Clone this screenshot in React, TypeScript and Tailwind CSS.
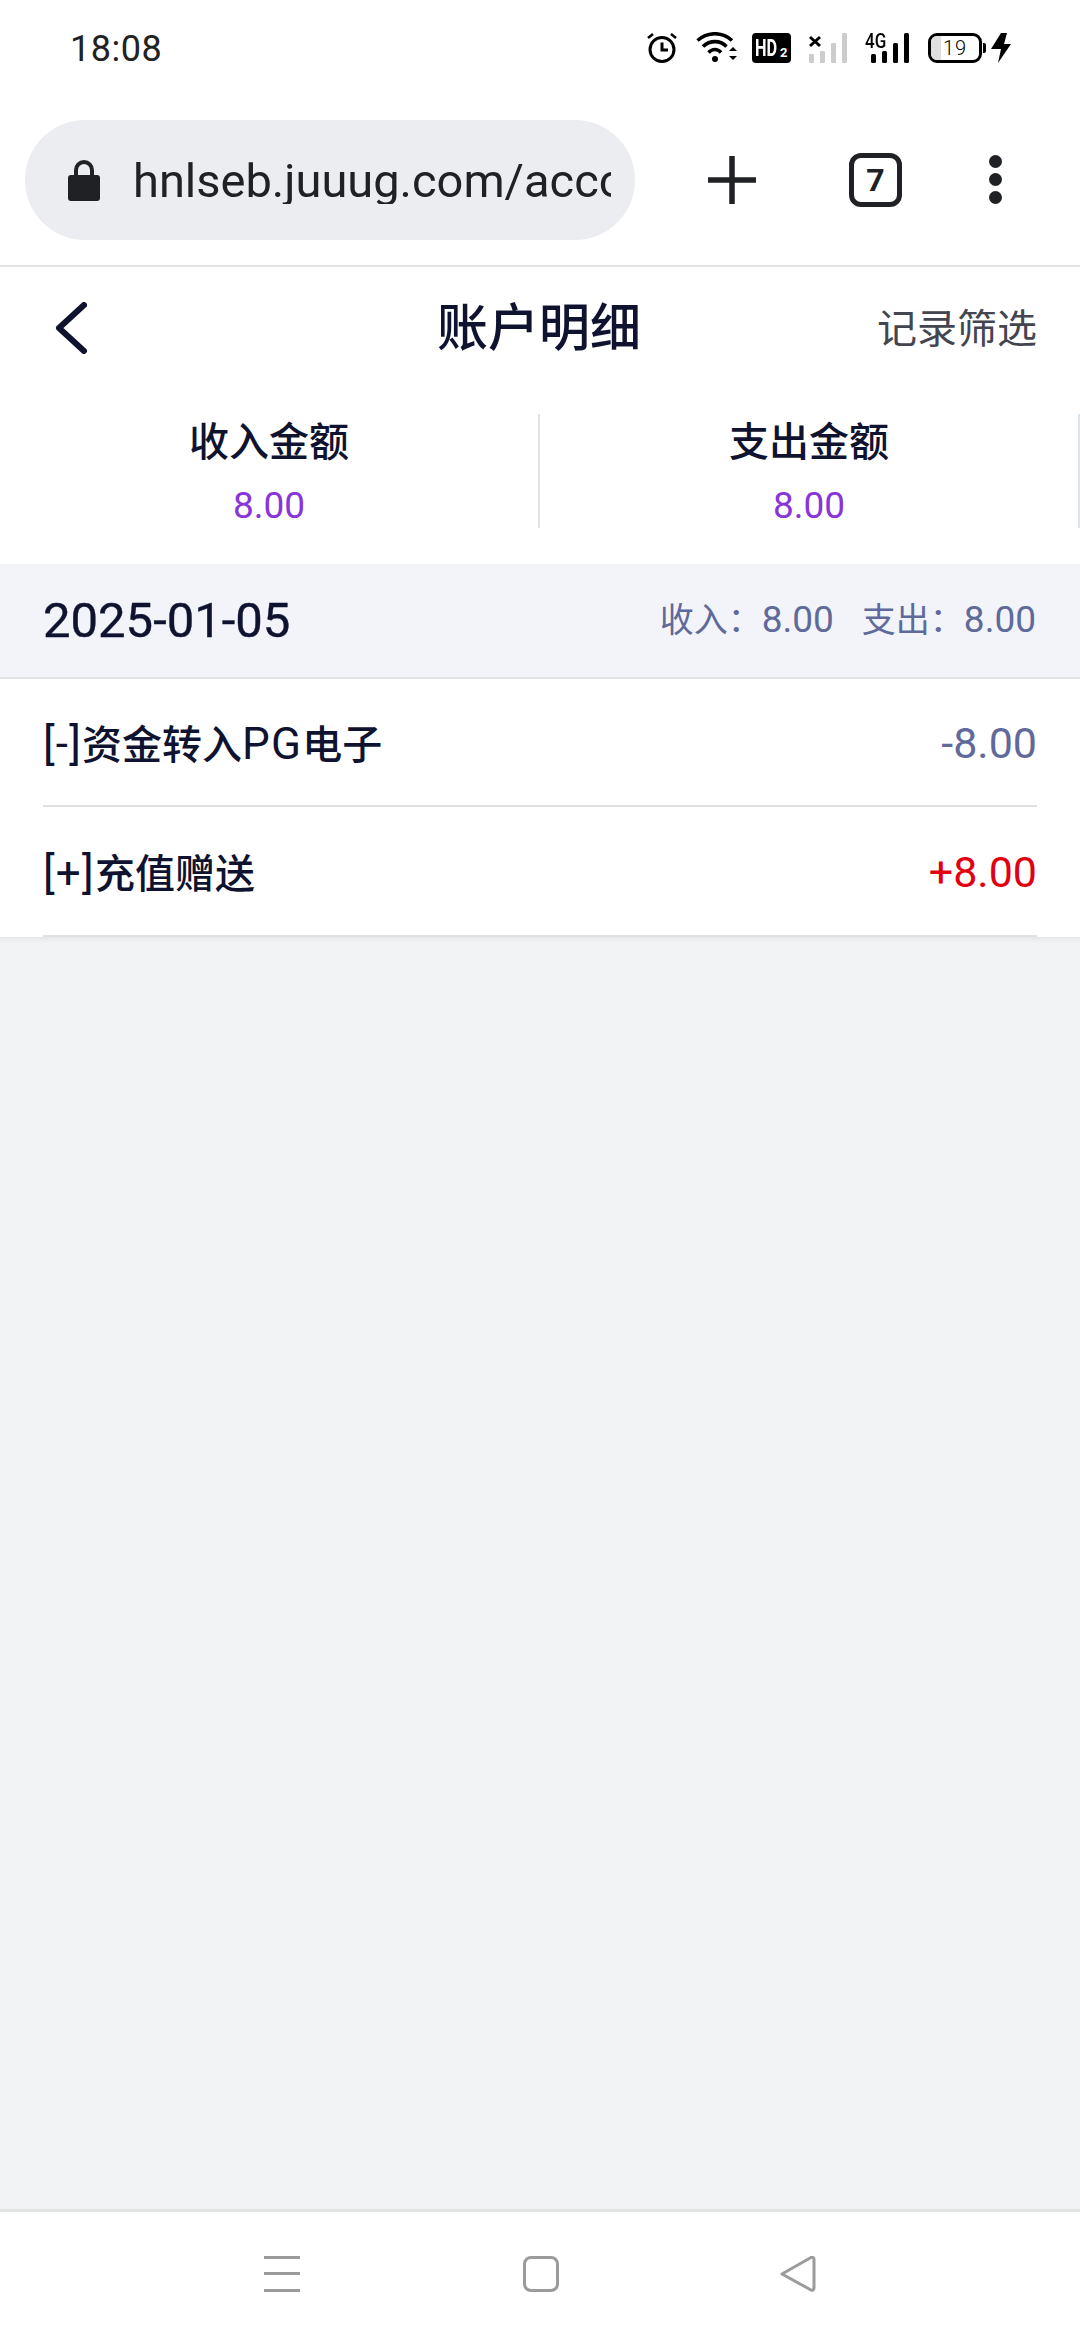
import type { ReactNode } from 'react'

const FONT = '[font-family:Roboto,"Noto_Sans_CJK_SC",sans-serif]'

/* ---------- status bar icons ---------- */

function AlarmIcon() {
  return (
    <svg width="30" height="31" viewBox="0 0 30 31" fill="none" stroke="#000">
      <circle cx="15" cy="17.5" r="12" strokeWidth="3" />
      <path d="M15 10.5v7.5h6" strokeWidth="3" />
      <path d="M1 6l5-4M29 6l-5-4" strokeWidth="2.6" />
    </svg>
  )
}

function WifiIcon() {
  return (
    <svg width="42" height="31" viewBox="0 0 42 31" fill="none">
      <path d="M1.5 8.5C12 -0.5 26 -0.5 36 8.5" stroke="#000" strokeWidth="3.6" />
      <path d="M7 14.5C14 8 24 8 30.5 14.5" stroke="#000" strokeWidth="3.6" />
      <path d="M12.5 20.5C16.5 16.5 21.5 16.5 25 20.5" stroke="#000" strokeWidth="3.6" />
      <circle cx="19" cy="27" r="3" fill="#000" />
      <path d="M33 19l4-4 4 4zM33 24l4 4 4-4z" fill="#000" />
    </svg>
  )
}

function HdBadge() {
  return (
    <div className="relative h-[30px] w-[39px] rounded-[4px] bg-black font-['Roboto',sans-serif] font-bold text-white">
      <span className="absolute left-[3px] top-[3px] origin-left text-[24px] leading-none [transform:scaleX(0.68)]">HD</span>
      <span className="absolute left-[28px] top-[13px] text-[13px] leading-none">2</span>
    </div>
  )
}

function EmptySignal() {
  return (
    <svg width="38" height="30" viewBox="0 0 38 30">
      <path d="M1 4l10 9M11 4L1 13" stroke="#000" strokeWidth="3" />
      <rect x="0" y="21" width="5" height="9" rx="1" fill="#ccc" />
      <rect x="11" y="18" width="5" height="12" rx="1" fill="#ccc" />
      <rect x="22" y="10" width="5" height="20" rx="1" fill="#ccc" />
      <rect x="33" y="0" width="5" height="30" rx="1" fill="#ccc" />
    </svg>
  )
}

function Signal4G() {
  return (
    <div className="relative h-[30px] w-[45px]">
      <span className="absolute -top-[2px] left-0 origin-left font-['Roboto',sans-serif] text-[20px] font-medium leading-none text-black [transform:scaleX(0.85)]">
        4G
      </span>
      <svg className="absolute left-0 top-0" width="45" height="30" viewBox="0 0 45 30">
        <rect x="6" y="21" width="5" height="9" rx="1.5" fill="#000" />
        <rect x="17" y="18" width="5" height="12" rx="1.5" fill="#000" />
        <rect x="28" y="10" width="5" height="20" rx="1.5" fill="#000" />
        <rect x="39" y="0" width="5" height="30" rx="1.5" fill="#000" />
      </svg>
    </div>
  )
}

function Battery() {
  return (
    <div className="flex items-center">
      <div className="relative flex h-[30px] w-[54px] items-center justify-center overflow-hidden rounded-[9px] border-[3px] border-black">
        <div className="absolute inset-y-0 left-0 w-[10px] bg-[#dfdfdf]" />
        <span className="relative font-['Roboto',sans-serif] text-[20px] font-light leading-none tracking-[1px] text-black">19</span>
      </div>
      <div className="ml-[1px] h-[10px] w-[3px] rounded-r-[2px] bg-black" />
    </div>
  )
}

function Bolt() {
  return (
    <svg width="20" height="30" viewBox="0 0 20 30">
      <path d="M10 0h6l-3 11h7L7 30l3-14H0z" fill="#000" />
    </svg>
  )
}

/* ---------- android navigation ---------- */

function NavBar() {
  return (
    <div className="flex h-[131px] items-start justify-between border-t-[3px] border-[#e2e4e2] bg-white pl-[264px] pr-[264px] pt-[44px]">
      <svg width="37" height="36" viewBox="0 0 37 36" fill="#9b9b9b">
        <rect x="0" y="0" width="36" height="3" />
        <rect x="0" y="16" width="36" height="3" />
        <rect x="0" y="33" width="36" height="3" />
      </svg>
      <div className="h-[36px] w-[36px] rounded-[8px] border-[3px] border-[#9b9b9b]" />
      <svg width="36" height="36" viewBox="0 0 36 36" fill="none">
        <path d="M2 18L31 1.5c1.5-.8 3 0 3 2V32c0 2-1.500 2.800-3 2z" stroke="#9b9b9b" strokeWidth="3" strokeLinejoin="round" />
      </svg>
    </div>
  )
}

/* ---------- page pieces ---------- */

function SummaryCell({ title }: { title: string }) {
  return (
    <div className="flex h-[114px] w-[540px] flex-col items-center justify-start border-r-2 border-[#dfe3ea] pt-[9px]">
      <div className="text-[40px] font-medium leading-[40px] text-[#0f1330]">{title}</div>
      <div className="mt-[25px] text-[37px] leading-[36px] text-[#8a35d8]">8.00</div>
    </div>
  )
}

function RecordRow({ label, amount, amountClass, height }: { label: ReactNode; amount: string; amountClass: string; height: string }) {
  return (
    <div className={`mx-[43px] flex items-center justify-between border-b-2 border-[#e0e0e0] pt-[3px] ${height}`}>
      <span className="text-[40px] font-medium leading-none text-[#0f1330]">{label}</span>
      <span className={`text-[43px] leading-none ${amountClass}`}>{amount}</span>
    </div>
  )
}

function Latin({ children }: { children: ReactNode }) {
  return <span className="text-[44px] font-normal tracking-[1.2px]">{children}</span>
}

function DayTotal({ label }: { label: string }) {
  return (
    <span className="text-[34px] leading-none">
      {label}：<span className="text-[37px]">8.00</span>
    </span>
  )
}

export default function App() {
  return (
    <div className={`flex h-[2340px] w-[1080px] flex-col overflow-hidden bg-[#f2f3f5] ${FONT}`}>
      {/* status bar */}
      <div className="flex h-[92px] items-center justify-between bg-white pl-[70px] pr-[69px] pt-[3px]">
        <span className="pt-[2px] text-[36px] leading-none tracking-[0.5px] text-[#222]">18:08</span>
        <div className="flex items-center">
          <AlarmIcon />
          <div className="ml-[19px]"><WifiIcon /></div>
          <div className="ml-[14px]"><HdBadge /></div>
          <div className="ml-[18px]"><EmptySignal /></div>
          <div className="ml-[18px]"><Signal4G /></div>
          <div className="ml-[18px]"><Battery /></div>
          <div className="ml-[5px]"><Bolt /></div>
        </div>
      </div>

      {/* browser toolbar */}
      <div className="flex h-[175px] items-start border-b-[2px] border-[#e2e2e2] bg-white pl-[25px] pt-[28px]">
        <div className="flex h-[120px] w-[610px] items-center rounded-[60px] bg-[#ebedf0] pl-[43px]">
          <svg width="32" height="42" viewBox="0 0 32 42" className="shrink-0">
            <path d="M8 18v-7a8 8 0 0 1 16 0v7" fill="none" stroke="#202124" strokeWidth="4" />
            <rect x="0" y="16" width="32" height="26" rx="3" fill="#202124" />
          </svg>
          <div className="ml-[33px] w-[478px] overflow-hidden whitespace-nowrap text-[47px] leading-none text-[#202124] [mask-image:linear-gradient(to_right,black_90%,#666_100%)]">
            hnlseb.juuug.com/account
          </div>
        </div>
        <svg width="48" height="48" viewBox="0 0 48 48" className="ml-[73px] mt-[36px]">
          <path d="M24 1v46M1 24h46" stroke="#202124" strokeWidth="5.5" strokeLinecap="round" />
        </svg>
        <div className="ml-[93px] mt-[33px] flex h-[54px] w-[53px] items-center justify-center rounded-[12px] border-[5px] border-[#202124] text-[32px] font-bold leading-none text-[#202124]">
          7
        </div>
        <div className="ml-[87px] mt-[35px] flex flex-col gap-[5px]">
          <div className="h-[13px] w-[13px] rounded-full bg-[#202124]" />
          <div className="h-[13px] w-[13px] rounded-full bg-[#202124]" />
          <div className="h-[13px] w-[13px] rounded-full bg-[#202124]" />
        </div>
      </div>

      {/* page content */}
      <div className="bg-white">
        <div className="relative flex h-[122px] items-center justify-between pl-[55px] pr-[43px]">
          <svg width="32" height="52" viewBox="0 0 32 52" fill="none">
            <path d="M29 3L4 26l25 23" stroke="#0f1330" strokeWidth="6" strokeLinecap="round" strokeLinejoin="round" />
          </svg>
          <span className="absolute left-[437px] top-[36px] text-[51px] font-medium leading-none text-[#0f1330]">账户明细</span>
          <span className="pt-[3px] text-[40px] leading-none text-[#44464f]">记录筛选</span>
        </div>

        <div className="flex pt-[25px]">
          <SummaryCell title="收入金额" />
          <SummaryCell title="支出金额" />
        </div>

        <div className="mt-[36px] flex h-[115px] items-center justify-between border-b-2 border-[#e2e3e6] bg-[#f2f4f9] pl-[43px] pr-[44px]">
          <span className="text-[49px] leading-none text-[#0f1330] [-webkit-text-stroke:0.4px_#0f1330]">2025-01-05</span>
          <span className="-mt-[2px] flex items-baseline gap-[28px] text-[#5f6a9b]">
            <DayTotal label="收入" />
            <DayTotal label="支出" />
          </span>
        </div>

        <RecordRow
          label={<><Latin>[-]</Latin>资金转入<Latin>PG</Latin>电子</>}
          amount="-8.00"
          amountClass="text-[#5f6a9b]"
          height="h-[128px]"
        />
        <RecordRow
          label={<><Latin>[+]</Latin>充值赠送</>}
          amount="+8.00"
          amountClass="text-[#e20010]"
          height="h-[130px]"
        />
      </div>
      <div className="h-[6px] bg-gradient-to-b from-[#e6e7ea] to-[#f2f3f5]" />

      <div className="flex-1" />
      <NavBar />
    </div>
  )
}
